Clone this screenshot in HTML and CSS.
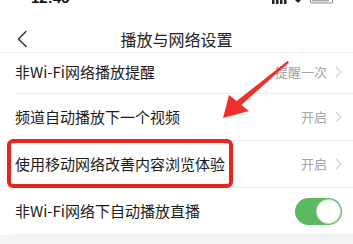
FILE: index.html
```html
<!DOCTYPE html>
<html lang="zh-CN">
<head>
<meta charset="utf-8">
<title>播放与网络设置</title>
<link rel="stylesheet" href="styles.css">
</head>
<body>
<div class="screen">
  <div class="status">
    <span class="time">12:46</span>
    <svg class="sys" width="70" height="4" viewBox="0 0 70 4">
      <rect x="3" y="0" width="2.5" height="4" fill="#222"/>
      <rect x="7" y="0" width="2.5" height="4" fill="#222"/>
      <rect x="11" y="0" width="2.5" height="4" fill="#222"/>
      <rect x="15" y="0" width="2.5" height="4" fill="#222"/>
      <path d="M26 0 L32 0 L29 3 Z" fill="#222"/>
      <rect x="41.5" y="-2" width="22" height="5" rx="1" fill="none" stroke="#888" stroke-width="1"/>
      <rect x="43" y="-2" width="17" height="3.5" fill="#aaa"/>
    </svg>
  </div>
  <header class="nav">
    <svg class="back" width="12" height="18" viewBox="0 0 12 18">
      <polyline points="10,1.5 2.5,9 10,16.5" fill="none" stroke="#333" stroke-width="1.5" stroke-linecap="round" stroke-linejoin="round"/>
    </svg>
    <h1 class="title">播放与网络设置</h1>
    <span></span>
  </header>
  <ul class="list">
    <li class="row row-first">
      <span class="label">非Wi-Fi网络播放提醒</span>
      <span class="value">提醒一次<svg class="chev" width="7" height="12" viewBox="0 0 7 12"><polyline points="1,1 6,6 1,11" fill="none" stroke="#d0d0d0" stroke-width="1.2"/></svg></span>
    </li>
    <li class="row">
      <span class="label">频道自动播放下一个视频</span>
      <span class="value">开启<svg class="chev" width="7" height="12" viewBox="0 0 7 12"><polyline points="1,1 6,6 1,11" fill="none" stroke="#d0d0d0" stroke-width="1.2"/></svg></span>
    </li>
    <li class="row">
      <span class="label">使用移动网络改善内容浏览体验</span>
      <span class="value">开启<svg class="chev" width="7" height="12" viewBox="0 0 7 12"><polyline points="1,1 6,6 1,11" fill="none" stroke="#d0d0d0" stroke-width="1.2"/></svg></span>
    </li>
    <li class="row">
      <span class="label">非Wi-Fi网络下自动播放直播</span>
      <span class="toggle"><span class="knob"></span></span>
    </li>
  </ul>
  <div class="footer"></div>
  <div class="highlight"></div>
  <svg class="arrow" width="353" height="244" viewBox="0 0 353 244">
    <polygon points="223,118 229,95 236.7,101.1 287.5,61 289,62.5 241.3,104.9 249,111" fill="#f0302a"/>
  </svg>
</div>
</body>
</html>
```

FILE: styles.css
```css
* { box-sizing: border-box; }
html, body { margin: 0; padding: 0; background: #fff; }
body {
  font-family: "Noto Sans CJK SC", "Noto Sans", sans-serif;
  color: #1a1a1a;
}
.screen {
  position: relative;
  width: 353px;
  height: 244px;
  overflow: hidden;
  display: flex;
  flex-direction: column;
}
.status {
  height: 4px;
  flex: 0 0 4px;
  overflow: hidden;
  display: flex;
  align-items: flex-end;
  justify-content: space-between;
  padding: 0 14px 0 31px;
}
.time {
  font-family: "Liberation Sans", sans-serif;
  font-weight: bold;
  font-size: 15px;
  line-height: 12px;
  color: #111;
}
.sys { display: block; }
.nav {
  flex: 0 0 49px;
  height: 49px;
  padding-top: 22px;
  display: grid;
  grid-template-columns: 1fr auto 1fr;
  align-items: center;
  border-bottom: 1px solid #f3f3f3;
}
.back { display: block; margin-left: 16px; }
.title {
  margin: 0;
  font-size: 16px;
  font-weight: normal;
  line-height: 26px;
  color: #222;
}
.list {
  list-style: none;
  margin: 0;
  padding: 0;
}
.row {
  height: 47px;
  margin-left: 15px;
  padding-right: 11px;
  border-bottom: 1px solid #ededed;
  display: flex;
  align-items: center;
  justify-content: space-between;
}
.row-first {
  height: 41px;
  padding-bottom: 2px;
}
.label {
  font-size: 15px;
  line-height: 20px;
  color: #1c1c1c;
}
.value {
  display: flex;
  align-items: center;
  gap: 8px;
  font-size: 13px;
  line-height: 18px;
  color: #a4a4a4;
}
.chev { display: block; }
.toggle {
  width: 47px;
  height: 27px;
  border-radius: 14px;
  background: #5cba62;
  display: flex;
  align-items: center;
  justify-content: flex-end;
  padding-right: 1px;
}
.knob {
  width: 25px;
  height: 25px;
  border-radius: 50%;
  background: #fff;
  border: 1px solid #d8d8d8;
}
.footer {
  flex: 1;
  background: #f4f4f4;
}
.highlight {
  position: absolute;
  left: 7px;
  top: 139px;
  width: 226px;
  height: 49px;
  border: 4px solid #e8261f;
  border-radius: 6px;
}
.arrow {
  position: absolute;
  left: 0;
  top: 0;
}
```
